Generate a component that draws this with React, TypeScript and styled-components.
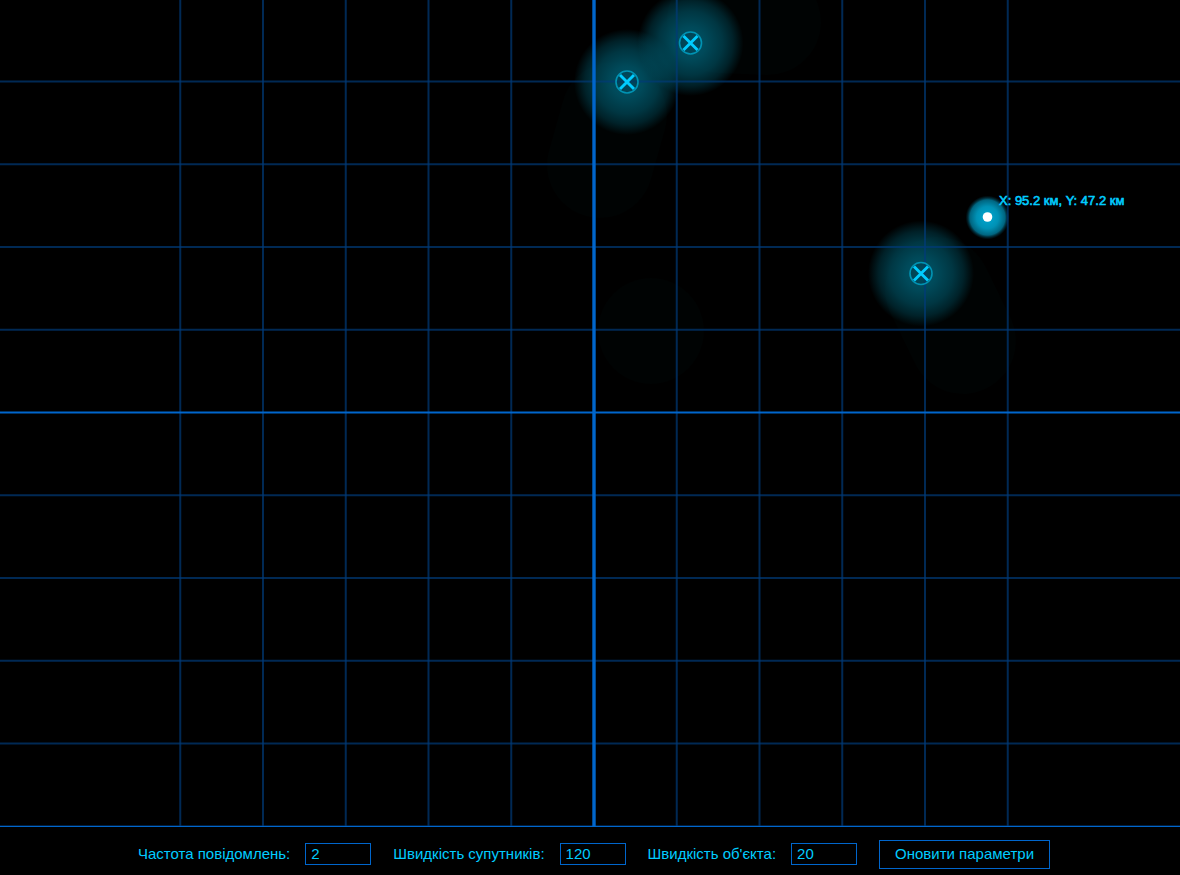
import React from 'react';
import styled, { createGlobalStyle } from 'styled-components';

const GlobalStyle = createGlobalStyle`
  * { box-sizing: border-box; }
  body {
    margin: 0;
    background: #000;
    color: #00ccff;
    font-family: "Liberation Sans", Arial, sans-serif;
  }
`;

const Page = styled.main`
  display: flex;
  flex-direction: column;
  height: 100vh;
`;

const Plot = styled.svg`
  display: block;
  flex: 1;
  width: 100%;
  min-height: 0;
`;

const PlotLabel = styled.text`
  fill: #00ccff;
  stroke: #00ccff;
  stroke-width: 0.6px;
  font-size: 13px;
`;

const Controls = styled.form`
  display: flex;
  flex-wrap: wrap;
  align-items: center;
  justify-content: center;
  gap: 8px 22px;
  padding: 13px 16px 6px 24px;
  border-top: 1px solid #0066cc;
`;

const Field = styled.label`
  display: flex;
  align-items: center;
  gap: 15px;
  padding-bottom: 2px;
  font-size: 15px;
  line-height: 20px;
  white-space: nowrap;
`;

const NumberInput = styled.input`
  width: 66px;
  height: 22px;
  padding: 0 5px;
  border: 1px solid #0066cc;
  border-radius: 0;
  background: #000;
  color: #00ccff;
  font: inherit;
  appearance: textfield;
  &::-webkit-inner-spin-button { display: none; }
`;

const UpdateButton = styled.button`
  height: 29px;
  padding: 0 15px 2px;
  border: 1px solid #0066cc;
  background: #000;
  color: #00ccff;
  font: inherit;
  font-size: 15px;
  cursor: pointer;
`;

const CENTER_X = 594;
const CENTER_Y = 412.5;
const STEP = 82.75;
const TICKS = [-5, -4, -3, -2, -1, 1, 2, 3, 4, 5];

const satellites = [
  { x: 627, y: 82 },
  { x: 690.5, y: 43 },
  { x: 921, y: 273.5 },
];

const trails = [
  { x1: 614, y1: 115, x2: 600, y2: 165 },
  { x1: 720, y1: 20, x2: 768, y2: 22 },
  { x1: 651, y1: 331, x2: 651, y2: 331 },
  { x1: 938, y1: 290, x2: 963, y2: 341 },
];

const fields = [
  { id: 'frequency', label: 'Частота повідомлень:', value: 2 },
  { id: 'satelliteSpeed', label: 'Швидкість супутників:', value: 120 },
  { id: 'objectSpeed', label: "Швидкість об'єкта:", value: 20 },
];

function Satellite({ x, y }: { x: number; y: number }) {
  return (
    <g transform={`translate(${x} ${y})`} fill="none">
      <circle r="11" stroke="#0093b3" strokeWidth="1.6" fill="#003a4c" fillOpacity="0.4" />
      <path d="M-7 -7L7 7M7 -7L-7 7" stroke="#00ccff" strokeWidth="2.9" />
    </g>
  );
}

export default function App() {
  return (
    <Page>
      <GlobalStyle />
      <Plot viewBox="0 0 1180 826" preserveAspectRatio="xMinYMin slice" role="img" aria-label="Карта супутників">
        <defs>
          <radialGradient id="signal">
            <stop offset="0" stopColor="#005468" />
            <stop offset="0.3" stopColor="#005163" stopOpacity="0.9" />
            <stop offset="0.6" stopColor="#005163" stopOpacity="0.66" />
            <stop offset="0.8" stopColor="#005163" stopOpacity="0.4" />
            <stop offset="1" stopColor="#005163" stopOpacity="0" />
          </radialGradient>
          <radialGradient id="target">
            <stop offset="0" stopColor="#00a8d2" />
            <stop offset="0.5" stopColor="#0091b5" />
            <stop offset="0.8" stopColor="#006580" />
            <stop offset="1" stopColor="#003040" stopOpacity="0" />
          </radialGradient>
        </defs>

        {trails.map((t) => (
          <path key={t.x1} d={`M${t.x1} ${t.y1}L${t.x2} ${t.y2}`} stroke="#000303" strokeWidth="106" strokeLinecap="round" />
        ))}
        {satellites.map((s) => (
          <circle key={s.x} cx={s.x} cy={s.y} r="53" fill="url(#signal)" />
        ))}
        <circle cx="987.5" cy="217.5" r="22" fill="url(#target)" />

        <g stroke="#003b77" strokeWidth="2" strokeOpacity="0.7">
          {TICKS.map((n) => (
            <React.Fragment key={n}>
              <path d={`M${CENTER_X + n * STEP} 0V826`} />
              <path d={`M0 ${CENTER_Y + n * STEP}H1180`} />
            </React.Fragment>
          ))}
        </g>
        <path d={`M${CENTER_X} 0V826`} stroke="#0066cc" strokeWidth="3.4" />
        <path d={`M0 ${CENTER_Y}H1180`} stroke="#0066cc" strokeWidth="2.2" />

        {satellites.map((s) => (
          <Satellite key={s.x} {...s} />
        ))}
        <circle cx="987.5" cy="217" r="4.8" fill="#fff" />
        <PlotLabel x="999" y="205">X: 95.2 км, Y: 47.2 км</PlotLabel>
      </Plot>

      <Controls onSubmit={(e) => e.preventDefault()}>
        {fields.map((f) => (
          <Field key={f.id} htmlFor={f.id}>
            {f.label}
            <NumberInput id={f.id} name={f.id} type="number" defaultValue={f.value} />
          </Field>
        ))}
        <UpdateButton type="submit">Оновити параметри</UpdateButton>
      </Controls>
    </Page>
  );
}
